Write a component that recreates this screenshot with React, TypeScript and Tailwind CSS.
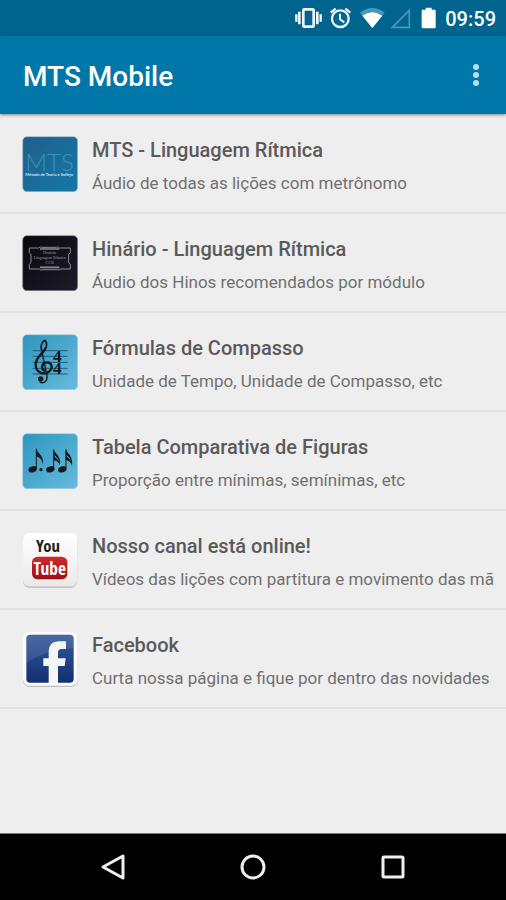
import type { ReactNode } from 'react';

const VibrateIcon = () => (
  <svg className="w-[30px] h-[22px]" viewBox="30 21 90 66" fill="none" stroke="#eef6fa" aria-hidden="true">
    <rect x="55" y="28" width="31" height="52" rx="3" strokeWidth="8" />
    <path d="M43 35v38M97 35v38" strokeWidth="8" />
    <path d="M34 43v22M107 43v22" strokeWidth="7" />
  </svg>
);

const AlarmIcon = () => (
  <svg className="w-[25px] h-[22px]" viewBox="135 21 75 66" fill="none" stroke="#eef6fa" aria-hidden="true">
    <circle cx="166" cy="56" r="25" strokeWidth="7" />
    <path d="M137 38l15-12M196 38l-15-12" strokeWidth="7" />
    <path d="M165 41v17l13 9" strokeWidth="6" />
  </svg>
);

const WifiIcon = () => (
  <svg className="w-[25px] h-[22px]" viewBox="225 21 75 66" aria-hidden="true">
    <path d="M262 84L225 38Q262 10 299 38Z" fill="#4f96b5" />
    <path d="M262 84L232 47Q262 26 292 47Z" fill="#fff" />
  </svg>
);

const SignalIcon = () => (
  <svg className="w-[25px] h-[22px]" viewBox="315 21 75 66" fill="none" stroke="#4f96b5" aria-hidden="true">
    <path d="M322 82L373 31V82Z" strokeWidth="5" />
  </svg>
);

const BatteryIcon = () => (
  <svg className="w-5 h-[22px]" viewBox="404 20 60 66" fill="#fff" aria-hidden="true">
    <path d="M421 22h18v6h9q3 0 3 3v50q0 3-3 3h-36q-3 0-3-3v-50q0-3 3-3h9z" />
  </svg>
);

const Tile = ({ children }: { children: ReactNode }) => (
  <svg className="w-14 h-14 shrink-0" viewBox="36 33 168 168" aria-hidden="true">
    <defs>
      <linearGradient id="deep" x1="0" y1="0" x2="1" y2="1">
        <stop offset="0" stopColor="#1f5f8c" />
        <stop offset="1" stopColor="#1478a8" />
      </linearGradient>
      <linearGradient id="night" x1="0" y1="0" x2="1" y2="1">
        <stop offset="0" stopColor="#08080c" />
        <stop offset="1" stopColor="#1d1c29" />
      </linearGradient>
      <linearGradient id="sky" x1="0" y1="0" x2="1" y2="1">
        <stop offset="0" stopColor="#2d96bf" />
        <stop offset="1" stopColor="#68bbdc" />
      </linearGradient>
      <linearGradient id="paper" x1="0" y1="0" x2="0" y2="1">
        <stop offset="0" stopColor="#ffffff" />
        <stop offset="1" stopColor="#e9e9e9" />
      </linearGradient>
      <linearGradient id="navy" x1="0" y1="0" x2="0" y2="1">
        <stop offset="0" stopColor="#34599a" />
        <stop offset="1" stopColor="#122f72" />
      </linearGradient>
      <linearGradient id="red" x1="0" y1="0" x2="0" y2="1">
        <stop offset="0" stopColor="#cf2b2b" />
        <stop offset="1" stopColor="#9d1014" />
      </linearGradient>
    </defs>
    {children}
  </svg>
);

const MtsIcon = () => (
  <Tile>
    <rect x="38" y="35" width="165" height="165" rx="13" fill="url(#deep)" stroke="#a8bfcc" strokeWidth="2" />
    <text fontFamily="Lato, sans-serif">
      <tspan x="46" y="137" fontSize="72" fontWeight="300" fill="#3a91b7">MTS</tspan>
      <tspan x="46" y="153" fontSize="12" fontWeight="700" fill="#cfe4ee">Método de Teoria e Solfejo</tspan>
    </text>
  </Tile>
);

const HymnalIcon = () => (
  <Tile>
    <rect x="38" y="35" width="165" height="165" rx="13" fill="url(#night)" stroke="#8d8d92" strokeWidth="2" />
    <g fill="none" stroke="#8c8c90" strokeWidth="3">
      <path d="M58 72h28q4-5 9-2h44q7-3 9 2h33v14q-7 4-5 10v15q-2 7 5 10v14h-30q-4 5-9 2h-44q-7 3-10-2H58v-14q6-4 5-10V96q1-7-5-10z" />
      <path d="M90 75h58M90 130h58" strokeWidth="5" />
    </g>
    <g fill="#9a9a9e" fontFamily="Liberation Serif, serif" textAnchor="middle">
      <text x="119" y="91" fontSize="13">Hinário</text>
      <text x="119" y="104" fontSize="12">Linguagem Rítmica</text>
      <text x="119" y="121" fontSize="13">CCB</text>
    </g>
  </Tile>
);

const ClefIcon = () => (
  <Tile>
    <rect x="38" y="35" width="165" height="165" rx="13" fill="url(#sky)" stroke="#a9d0e0" strokeWidth="2" />
    <path d="M68 83h105M68 100h105M68 118h105M68 136h105M68 153h105" stroke="#235d75" strokeWidth="3" />
    <g fill="none" stroke="#15191c" strokeLinecap="round">
      <path d="M95 83C89 67 98 54 105 52C115 63 108 79 96 91" strokeWidth="5" />
      <path d="M106 76C99 93 78 101 77 124C76 147 101 158 117 146C133 132 122 115 107 119C94 123 93 138 103 143" strokeWidth="7" />
      <path d="M95 83L111 158C113 176 101 183 90 177" strokeWidth="4" />
    </g>
    <circle cx="92" cy="168" r="8" fill="#15191c" />
    <text fill="#15191c" fontFamily="Liberation Serif, serif" fontWeight="700" fontSize="52">
      <tspan x="129" y="118">4</tspan>
      <tspan x="129" y="153">4</tspan>
    </text>
  </Tile>
);

const NotesIcon = () => (
  <Tile>
    <rect x="38" y="35" width="165" height="165" rx="13" fill="url(#sky)" stroke="#a9d0e0" strokeWidth="2" />
    <g fill="#17191b">
      <ellipse cx="68" cy="142" rx="13" ry="9" transform="rotate(-18 68 142)" />
      <ellipse cx="121" cy="142" rx="13" ry="9" transform="rotate(-18 121 142)" />
      <ellipse cx="157" cy="142" rx="13" ry="9" transform="rotate(-18 157 142)" />
      <circle cx="93" cy="143" r="5" />
      <path d="M79 80C83 96 104 100 98 129C97 111 88 106 79 103Z" />
      <path d="M130 82C135 95 153 101 150 129C147 111 140 103 130 98Z" />
      <path d="M130 99C136 109 149 112 150 129C144 118 137 116 130 114Z" />
      <path d="M167 82C172 95 190 101 186 133C184 112 177 103 167 98Z" />
      <path d="M167 99C173 109 186 112 186 129C181 118 174 116 167 114Z" />
    </g>
    <path d="M79 80v60M131 82v58M168 82v58" stroke="#17191b" strokeWidth="3" />
  </Tile>
);

const YouTubeIcon = () => (
  <Tile>
    <rect x="39" y="40" width="163" height="161" rx="20" fill="#c6c6c6" />
    <rect x="39" y="36" width="163" height="160" rx="20" fill="url(#paper)" />
    <rect x="66" y="107" width="106" height="68" rx="17" fill="url(#red)" />
    <text fontFamily="Open Sans Condensed, Roboto Condensed, Roboto, sans-serif" fontWeight="700" textAnchor="middle">
      <tspan x="114" y="94" fontSize="50" fontWeight="500" fill="#222">You</tspan>
      <tspan x="119" y="162" fontSize="52" fill="#fff">Tube</tspan>
    </text>
  </Tile>
);

const FacebookIcon = () => (
  <Tile>
    <rect x="39" y="40" width="164" height="161" rx="20" fill="#bfbfbf" />
    <rect x="39" y="36" width="164" height="161" rx="20" fill="#fafafa" />
    <rect x="49" y="44" width="142" height="144" rx="12" fill="url(#navy)" />
    <path d="M49 56q0-12 12-12h118q12 0 12 12v28Q110 88 49 128Z" fill="#fff" opacity="0.1" />
    <path d="M116 189V138H100V115H116V98Q116 64 148 64H168V87H154Q144 87 144 98V115H167L164 138H144V189Z" fill="#f5f5f5" />
  </Tile>
);

const items = [
  { icon: <MtsIcon />, title: 'MTS - Linguagem Rítmica', desc: 'Áudio de todas as lições com metrônomo' },
  { icon: <HymnalIcon />, title: 'Hinário - Linguagem Rítmica', desc: 'Áudio dos Hinos recomendados por módulo' },
  { icon: <ClefIcon />, title: 'Fórmulas de Compasso', desc: 'Unidade de Tempo, Unidade de Compasso, etc' },
  { icon: <NotesIcon />, title: 'Tabela Comparativa de Figuras', desc: 'Proporção entre mínimas, semínimas, etc' },
  { icon: <YouTubeIcon />, title: 'Nosso canal está online!', desc: 'Vídeos das lições com partitura e movimento das mã' },
  { icon: <FacebookIcon />, title: 'Facebook', desc: 'Curta nossa página e fique por dentro das novidades' },
];

const App = () => {
  return (
    <div className="min-h-screen flex flex-col bg-[#eeeeee] font-[Roboto,sans-serif]">
      <div className="h-9 shrink-0 flex items-center justify-end gap-[5px] pr-[10px] bg-[#00658e]">
        <VibrateIcon />
        <AlarmIcon />
        <WifiIcon />
        <SignalIcon />
        <BatteryIcon />
        <span className="pt-px text-[20px] leading-6 font-medium text-white">09:59</span>
      </div>

      <header className="h-[78px] shrink-0 flex items-center justify-between pl-[23px] pr-4 pt-1 bg-[#0077a8] shadow-[0_1px_3px_rgba(0,0,0,0.45)]">
        <h1 className="text-[28px] leading-8 font-medium text-white">MTS Mobile</h1>
        <button type="button" aria-label="Mais opções" className="w-7 h-7 flex items-start justify-center">
          <svg className="w-2 h-6" viewBox="0 0 8 24" fill="#b5e0f2" aria-hidden="true">
            <circle cx="4" cy="4" r="3" />
            <circle cx="4" cy="12" r="3" />
            <circle cx="4" cy="20" r="3" />
          </svg>
        </button>
      </header>

      <main className="flex-1 pt-px">
        <ul>
          {items.map((item) => (
            <li key={item.title} className="border-b-2 border-[#e2e2e2]">
              <a href="#" className="h-[97px] flex items-start gap-[14px] pl-[22px] pr-3 pt-[21px]">
                {item.icon}
                <div className="min-w-0">
                  <h2 className="text-[20px] leading-7 font-medium text-[#5a5a5a] whitespace-nowrap">{item.title}</h2>
                  <p className="mt-[5px] text-[17px] leading-7 text-[#707070] whitespace-nowrap overflow-hidden">{item.desc}</p>
                </div>
              </a>
            </li>
          ))}
        </ul>
      </main>

      <nav className="h-[67px] shrink-0 flex items-center justify-center gap-[100px] bg-black border-t border-[#777777]">
        <button type="button" aria-label="Voltar" className="w-10 h-10 flex items-center justify-center">
          <svg className="w-7 h-7" viewBox="0 0 28 28" fill="none" stroke="#efefef" strokeWidth="3" strokeLinejoin="round" aria-hidden="true">
            <path d="M4 14L24 3V25Z" />
          </svg>
        </button>
        <button type="button" aria-label="Início" className="w-10 h-10 flex items-center justify-center">
          <svg className="w-7 h-7" viewBox="0 0 28 28" fill="none" stroke="#efefef" strokeWidth="3" aria-hidden="true">
            <circle cx="14" cy="14" r="11" />
          </svg>
        </button>
        <button type="button" aria-label="Recentes" className="w-10 h-10 flex items-center justify-center">
          <svg className="w-7 h-7" viewBox="0 0 28 28" fill="none" stroke="#efefef" strokeWidth="3" aria-hidden="true">
            <rect x="4" y="4" width="20" height="20" rx="1" />
          </svg>
        </button>
      </nav>
    </div>
  );
};

export default App;
